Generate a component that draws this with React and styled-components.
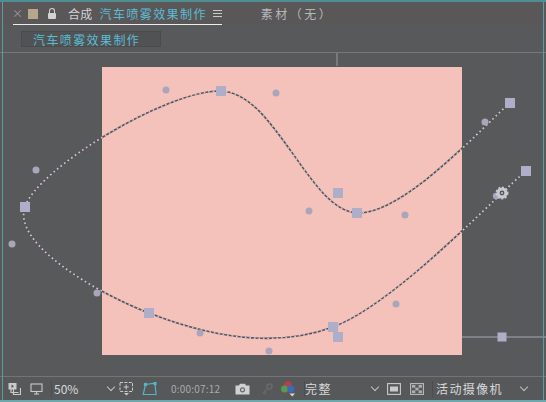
import React from 'react';
import styled, { createGlobalStyle } from 'styled-components';

const GlobalStyle = createGlobalStyle`
  html, body {
    margin: 0;
    padding: 0;
    background: #58595b;
    overflow: hidden;
  }
`;

const FONT = `"Noto Sans CJK SC", "Noto Sans", "Liberation Sans", sans-serif`;

const handles = [
  [166, 90], [276, 93], [36, 170], [12, 244], [97, 293], [200, 333],
  [269, 351], [396, 304], [309, 211], [405, 215], [485, 122],
];
const nodes = [
  [25, 207], [221, 91], [357, 213], [510, 103], [526, 171],
  [149, 313], [333, 327], [338, 193], [338, 337],
];
const CURVE = `M510 103 C490 119 405 215 357 213 C309 211 276 93 221 91 C166 90 36 170 25 207
  C12 244 97 293 149 313 C200 333 269 351 333 327 C396 304 502 190 526 171`;

const App = () => (
  <Frame>
    <GlobalStyle />
    <TabBar>
      <CloseMark>×</CloseMark>
      <Swatch />
      <LockIcon />
      <ActiveTab>
        <TabLabel>合成</TabLabel>
        <TabName>汽车喷雾效果制作</TabName>
        <Burger><i /><i /><i /></Burger>
      </ActiveTab>
      <SourceTab>素材（无）</SourceTab>
    </TabBar>
    <CrumbRow>
      <Crumb>汽车喷雾效果制作</Crumb>
    </CrumbRow>
    <Viewer>
      <Comp />
      <Overlay viewBox="0 0 546 323" width="546" height="323">
        <g transform="translate(0 -53)">
          <line x1="337" y1="53" x2="337" y2="66" stroke="#9a9ca0" strokeWidth="1" />
          <line x1="462" y1="337" x2="546" y2="337" stroke="#a4a8b4" strokeWidth="1" />
          <path d={CURVE} fill="none" stroke="#5c4f55" strokeWidth="1.6" />
          <path d={CURVE} fill="none" stroke="#c6c7cf" strokeWidth="1.7" strokeDasharray="1.7 2.8" />
          {handles.map(([x, y]) => (
            <circle key={`${x}-${y}`} cx={x} cy={y} r="3.5" fill="#a9a6bb" />
          ))}
          {nodes.map(([x, y]) => (
            <rect key={`${x}-${y}`} x={x - 5} y={y - 5} width="10" height="10" fill="#aeaec8" />
          ))}
          <rect x="497.5" y="332.5" width="9" height="9" fill="#aeaec8" />
          <g transform="translate(502 193)">
            <circle cx="-6" cy="3" r="3.2" fill="#a9a6bb" />
            <circle r="5.5" fill="#c8c8d0" stroke="#c8c8d0" strokeWidth="2" strokeDasharray="2 1.6" />
            <circle r="2.4" fill="#55565a" />
            <circle r="1" fill="#c8c8d0" />
          </g>
        </g>
      </Overlay>
    </Viewer>
    <Toolbar>
      <ToolIcon $w={13}>
        <svg width="13" height="13" viewBox="0 0 13 13" fill="none">
          <rect x="0.5" y="1" width="8" height="6.5" fill="#c9cbcb" />
          <path d="M3 4.5V10.5H10.5M5.5 7V12.5H12.5V6" stroke="#c9cbcb" strokeWidth="1.2" />
          <path d="M3.5 2.5L6 4.2L3.5 6Z" fill="#555" />
        </svg>
      </ToolIcon>
      <ToolIcon $w={13} $ml={9}>
        <svg width="13" height="12" viewBox="0 0 13 12" fill="none" stroke="#c9cbcb" strokeWidth="1.1">
          <rect x="1" y="1" width="11" height="7.5" />
          <path d="M4 11H9" />
          <path d="M6.5 8.5V11" />
        </svg>
      </ToolIcon>
      <Divider />
      <Value $w={24} $ml={2}>50%</Value>
      <Chevron $ml={30} />
      <ToolIcon $w={15} $ml={5}>
        <svg width="15" height="15" viewBox="0 0 15 15" fill="none" stroke="#c9cbcb" strokeWidth="1">
          <rect x="1" y="1.5" width="12.5" height="9" strokeDasharray="3 1.4" />
          <path d="M7.2 3.5V8.5M4.7 6H9.7" />
          <path d="M5 12H10L7.5 14.5Z" fill="#c9cbcb" stroke="none" />
        </svg>
      </ToolIcon>
      <ToolIcon $w={15} $ml={8}>
        <svg width="15" height="14" viewBox="0 0 15 14" fill="none" stroke="#55b4c8" strokeWidth="1.2">
          <path d="M3.5 2.5L13 1.2L14 12.5H1.2Z" />
          <rect x="2.5" y="1.5" width="2" height="2" fill="#55b4c8" />
          <rect x="12" y="0.5" width="2" height="2" fill="#55b4c8" />
        </svg>
      </ToolIcon>
      <Timecode>0:00:07:12</Timecode>
      <ToolIcon $w={15} $ml={16}>
        <svg width="15" height="12" viewBox="0 0 15 12">
          <path d="M0.5 2.5H4L5 0.8H10L11 2.5H14.5V11.5H0.5Z" fill="#d0d2d2" />
          <circle cx="7.5" cy="6.8" r="2.6" fill="#6a6b6d" />
          <circle cx="7.5" cy="6.8" r="1.4" fill="#d0d2d2" />
        </svg>
      </ToolIcon>
      <ToolIcon $w={11} $ml={12}>
        <svg width="11" height="12" viewBox="0 0 11 12" fill="none" stroke="#68696b" strokeWidth="1.6">
          <circle cx="7.5" cy="3.5" r="2.5" />
          <path d="M5.5 5.5L1 10.5M2 9L4 11" />
        </svg>
      </ToolIcon>
      <ToolIcon $w={16} $ml={7}>
        <svg width="16" height="17" viewBox="0 0 16 17">
          <circle cx="8" cy="4.5" r="3.6" fill="#b5404a" />
          <circle cx="4.6" cy="9" r="3.6" fill="#5a9a50" />
          <circle cx="10.8" cy="8.8" r="3.6" fill="#4068b8" />
          <path d="M9.5 13.5H15L12.2 16.5Z" fill="#d8d8d8" />
        </svg>
      </ToolIcon>
      <Divider />
      <Value $w={27} $ml={0} $wide>完整</Value>
      <Chevron $ml={40} />
      <ToolIcon $w={14} $ml={9}>
        <svg width="14" height="12" viewBox="0 0 14 12" fill="none">
          <rect x="0.6" y="0.6" width="12.8" height="10.8" stroke="#c9cbcb" strokeWidth="1.1" />
          <rect x="3" y="3.5" width="8" height="5" fill="#c9cbcb" />
        </svg>
      </ToolIcon>
      <ToolIcon $w={14} $ml={9}>
        <svg width="14" height="12" viewBox="0 0 14 12" fill="#aeb0b0">
          <rect x="0.6" y="0.6" width="12.8" height="10.8" fill="none" stroke="#b9bbbb" strokeWidth="1.1" />
          <rect x="2" y="2" width="3.3" height="2.7" />
          <rect x="8.6" y="2" width="3.3" height="2.7" />
          <rect x="5.3" y="4.7" width="3.3" height="2.7" />
          <rect x="2" y="7.4" width="3.3" height="2.7" />
          <rect x="8.6" y="7.4" width="3.3" height="2.7" />
        </svg>
      </ToolIcon>
      <Divider />
      <Value $w={67} $ml={3} $wide>活动摄像机</Value>
      <Chevron $ml={18} />
    </Toolbar>
  </Frame>
);

const Frame = styled.div`
  position: relative;
  box-sizing: border-box;
  width: 546px;
  height: 402px;
  display: flex;
  flex-direction: column;
  overflow: hidden;
  background: #58595b;
  border-top: 2px solid #4f8e93;
  border-bottom: 2px solid #6aa8ac;
  font-family: ${FONT};
  color: #c9cbcb;

  &::after {
    content: '';
    position: absolute;
    top: 0;
    bottom: 0;
    left: 2px;
    right: 2px;
    border-left: 1px solid #5b9ba3;
    border-right: 1px solid #5b9ba3;
    pointer-events: none;
  }
`;

const TabBar = styled.div`
  height: 23px;
  display: flex;
  align-items: center;
  flex: none;
  padding-left: 12px;
  font-size: 12px;
  background: #5a5759;
`;

const CloseMark = styled.span`
  width: 8px;
  font-size: 11px;
  line-height: 1;
  color: #9a9c9e;
  text-align: center;
`;

const Swatch = styled.span`
  width: 10px;
  height: 10px;
  margin-left: 8px;
  background: #b5a68c;
`;

const LockIcon = styled.span`
  position: relative;
  width: 8px;
  height: 6px;
  margin: 5px 0 0 10px;
  background: #d2d2d2;
  border-radius: 1px;

  &::before {
    content: '';
    position: absolute;
    left: 1px;
    top: -5px;
    width: 4px;
    height: 4px;
    border: 1.2px solid #d2d2d2;
    border-bottom: none;
    border-radius: 3px 3px 0 0;
  }
`;

const ActiveTab = styled.div`
  display: flex;
  align-items: center;
  height: 23px;
  margin-left: 12px;
  position: relative;

  &::after {
    content: '';
    position: absolute;
    left: -55px;
    right: 0;
    bottom: 0;
    height: 1.5px;
    background: #eceded;
  }
`;

const TabLabel = styled.span`
  letter-spacing: 0.3px;
  color: #d0d2d2;
`;

const TabName = styled.span`
  margin-left: 7px;
  letter-spacing: 1.4px;
  color: #5cbcd3;
  white-space: nowrap;
`;

const Burger = styled.span`
  display: flex;
  flex-direction: column;
  gap: 2px;
  margin-left: 6px;
  width: 9px;

  i {
    display: block;
    height: 1px;
    background: #c9cbcb;
  }
`;

const SourceTab = styled.span`
  margin-left: 39px;
  letter-spacing: 2.5px;
  color: #b5b7b7;
  white-space: nowrap;
`;

const CrumbRow = styled.div`
  height: 28px;
  flex: none;
  padding: 6px 0 0 21px;
  box-sizing: border-box;
  border-bottom: 1px solid #76787a;
`;

const Crumb = styled.div`
  box-sizing: border-box;
  width: 140px;
  height: 16px;
  padding-left: 11px;
  font-size: 12px;
  line-height: 15px;
  letter-spacing: 1.4px;
  color: #5cbcd3;
  white-space: nowrap;
  background: #515254;
  border: 1px solid #4a4b4d;
`;

const Viewer = styled.div`
  position: relative;
  flex: 1;
  padding: 14px 0 0 102px;
`;

const Comp = styled.div`
  width: 360px;
  height: 288px;
  background: #f4c2bb;
`;

const Overlay = styled.svg`
  position: absolute;
  left: 0;
  top: 0;
  overflow: visible;
`;

const Toolbar = styled.div`
  height: 24px;
  flex: none;
  display: flex;
  align-items: center;
  padding-left: 8px;
  border-top: 1px solid #727476;
  box-sizing: border-box;
  background: #56585a;
`;

const ToolIcon = styled.span`
  flex: none;
  display: flex;
  align-items: center;
  justify-content: center;
  width: ${props => props.$w}px;
  margin-left: ${props => props.$ml || 0}px;
`;

const Divider = styled.span`
  flex: none;
  width: 1px;
  height: 16px;
  margin-left: 8px;
  background: #4c4d4f;
`;

const Value = styled.span`
  flex: none;
  width: ${props => props.$w}px;
  margin-left: ${props => props.$ml}px;
  font-size: 12px;
  letter-spacing: ${props => (props.$wide ? '1.4px' : '0')};
  color: #d8dada;
  white-space: nowrap;
`;

const Chevron = styled.span`
  flex: none;
  box-sizing: border-box;
  width: 6px;
  height: 6px;
  margin: -3px 0 0 ${props => props.$ml}px;
  border-right: 1.2px solid #bfc1c1;
  border-bottom: 1.2px solid #bfc1c1;
  transform: rotate(45deg);
`;

const Timecode = styled.span`
  flex: none;
  width: 48px;
  margin-left: 14px;
  font-size: 10px;
  letter-spacing: 0.2px;
  color: #a9abab;
  white-space: nowrap;
`;

export default App;
